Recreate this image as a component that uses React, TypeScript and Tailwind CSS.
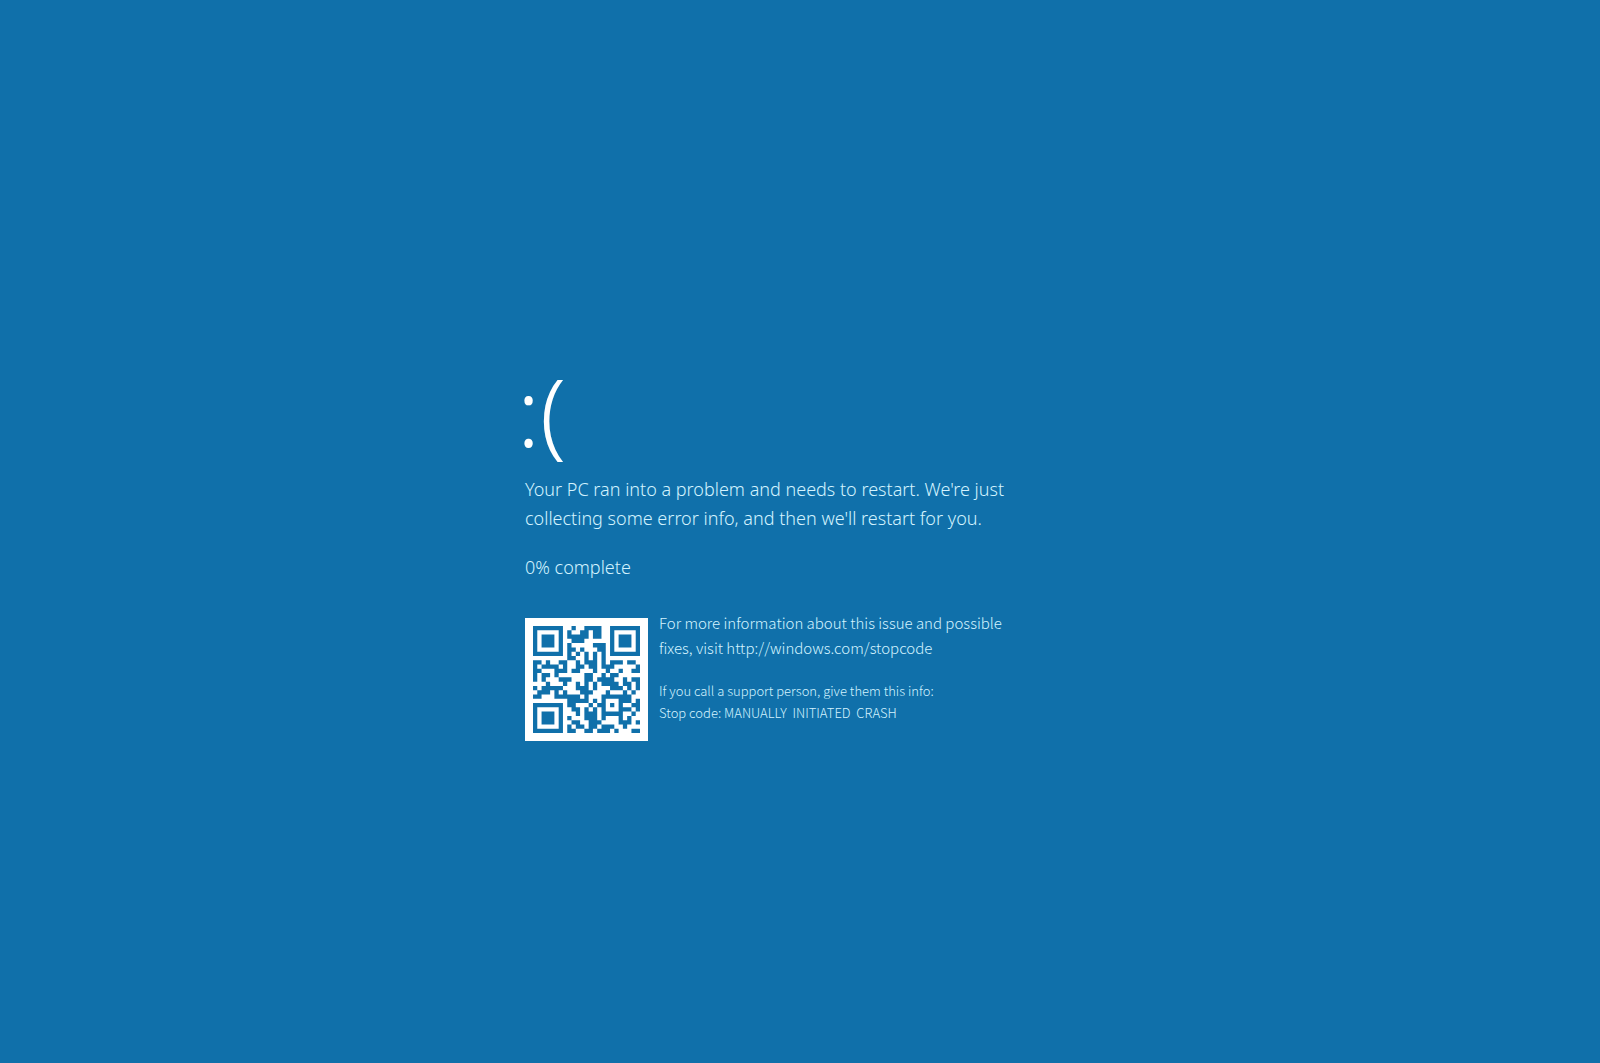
const STOP_URL = "http://windows.com/stopcode";
const SIZE = 25;
const DATA_CODEWORDS = 34;
const EC_CODEWORDS = 10;
const FORMAT_BITS = "110100101110110"; // level L, mask 7

function gfMultiply(x: number, y: number): number {
  let z = 0;
  for (let i = 7; i >= 0; i--) {
    z = (z << 1) ^ ((z >>> 7) * 0x11d);
    z ^= ((y >>> i) & 1) * x;
  }
  return z;
}

function errorCorrection(data: number[]): number[] {
  const divisor: number[] = new Array(EC_CODEWORDS).fill(0);
  divisor[EC_CODEWORDS - 1] = 1;
  let root = 1;
  for (let i = 0; i < EC_CODEWORDS; i++) {
    for (let j = 0; j < EC_CODEWORDS; j++) {
      divisor[j] = gfMultiply(divisor[j], root);
      if (j + 1 < EC_CODEWORDS) divisor[j] ^= divisor[j + 1];
    }
    root = gfMultiply(root, 2);
  }
  const result: number[] = new Array(EC_CODEWORDS).fill(0);
  for (const b of data) {
    const factor = b ^ (result.shift() as number);
    result.push(0);
    divisor.forEach((c, i) => (result[i] ^= gfMultiply(c, factor)));
  }
  return result;
}

function encode(text: string): string {
  const byte = (n: number) => n.toString(2).padStart(8, "0");
  let bits = "0100" + byte(text.length);
  for (const ch of text) bits += byte(ch.charCodeAt(0));
  bits += "0000";
  const data = (bits.match(/.{8}/g) ?? []).map((b) => parseInt(b, 2));
  for (let pad = 0xec; data.length < DATA_CODEWORDS; pad ^= 0xec ^ 0x11) data.push(pad);
  return [...data, ...errorCorrection(data)].map(byte).join("");
}

/** Version 2 QR symbol, error correction level L. */
function qrMatrix(text: string): boolean[][] {
  const grid: (boolean | null)[][] = Array.from({ length: SIZE }, () => new Array(SIZE).fill(null));
  const set = (r: number, c: number, dark: boolean) => {
    if (r >= 0 && c >= 0 && r < SIZE && c < SIZE) grid[r][c] = dark;
  };

  for (let i = 0; i < SIZE; i++) {
    set(6, i, i % 2 === 0);
    set(i, 6, i % 2 === 0);
  }
  for (const [r, c] of [[3, 3], [3, SIZE - 4], [SIZE - 4, 3]]) {
    for (let dr = -4; dr <= 4; dr++) {
      for (let dc = -4; dc <= 4; dc++) {
        const d = Math.max(Math.abs(dr), Math.abs(dc));
        set(r + dr, c + dc, d !== 2 && d !== 4);
      }
    }
  }
  for (let dr = -2; dr <= 2; dr++) {
    for (let dc = -2; dc <= 2; dc++) {
      set(18 + dr, 18 + dc, Math.max(Math.abs(dr), Math.abs(dc)) !== 1);
    }
  }

  const format = [...FORMAT_BITS].reverse().map((b) => b === "1");
  for (let i = 0; i <= 5; i++) set(i, 8, format[i]);
  set(7, 8, format[6]);
  set(8, 8, format[7]);
  set(8, 7, format[8]);
  for (let i = 9; i < 15; i++) set(8, 14 - i, format[i]);
  for (let i = 0; i < 8; i++) set(8, SIZE - 1 - i, format[i]);
  for (let i = 8; i < 15; i++) set(SIZE - 15 + i, 8, format[i]);
  set(SIZE - 8, 8, true);

  const bits = encode(text);
  let n = 0;
  for (let right = SIZE - 1; right >= 1; right -= 2) {
    if (right === 6) right = 5;
    for (let v = 0; v < SIZE; v++) {
      for (let j = 0; j < 2; j++) {
        const c = right - j;
        const upward = ((right + 1) & 2) === 0;
        const r = upward ? SIZE - 1 - v : v;
        if (grid[r][c] !== null) continue;
        const mask = (((r + c) % 2) + ((r * c) % 3)) % 2 === 0;
        grid[r][c] = (bits[n++] === "1") !== mask;
      }
    }
  }
  return grid as boolean[][];
}

function QrCode({ text }: { text: string }) {
  const path = qrMatrix(text)
    .flatMap((row, r) => row.map((dark, c) => (dark ? `M${c} ${r}h1v1h-1z` : "")))
    .join("");
  return (
    <svg
      role="img"
      aria-label={`QR code for ${text}`}
      viewBox={`0 0 ${SIZE} ${SIZE}`}
      className="mt-2 size-[123px] shrink-0 bg-white p-2 text-[#1070aa]"
    >
      <path d={path} fill="currentColor" />
    </svg>
  );
}

export default function App() {
  return (
    <main className="flex min-h-screen items-center justify-center bg-[#1070aa] pt-10 font-['Noto_Sans',sans-serif] font-light text-[#d3f3ff]">
      <div className="w-full max-w-[550px]">
        <h1 className="-ml-2 text-[94px] leading-[96px] font-light text-white">:(</h1>
        <p className="mt-4 text-[18px] leading-[29px]">
          Your PC ran into a problem and needs to restart. We're just
          <br />
          collecting some error info, and then we'll restart for you.
        </p>
        <p className="mt-5 text-[18px] leading-[29px]">0% complete</p>
        <div className="mt-7 flex gap-[11px] font-['Noto_Sans_CJK_SC','Noto_Sans',sans-serif]">
          <QrCode text={STOP_URL} />
          <div>
            <p className="text-[15px] leading-[25px]">
              For more information about this issue and possible
              <br />
              fixes, visit {STOP_URL}
            </p>
            <p className="mt-5 text-[13px] leading-[22px]">
              If you call a support person, give them this info:
              <br />
              Stop code: MANUALLY&nbsp; INITIATED&nbsp; CRASH
            </p>
          </div>
        </div>
      </div>
    </main>
  );
}
